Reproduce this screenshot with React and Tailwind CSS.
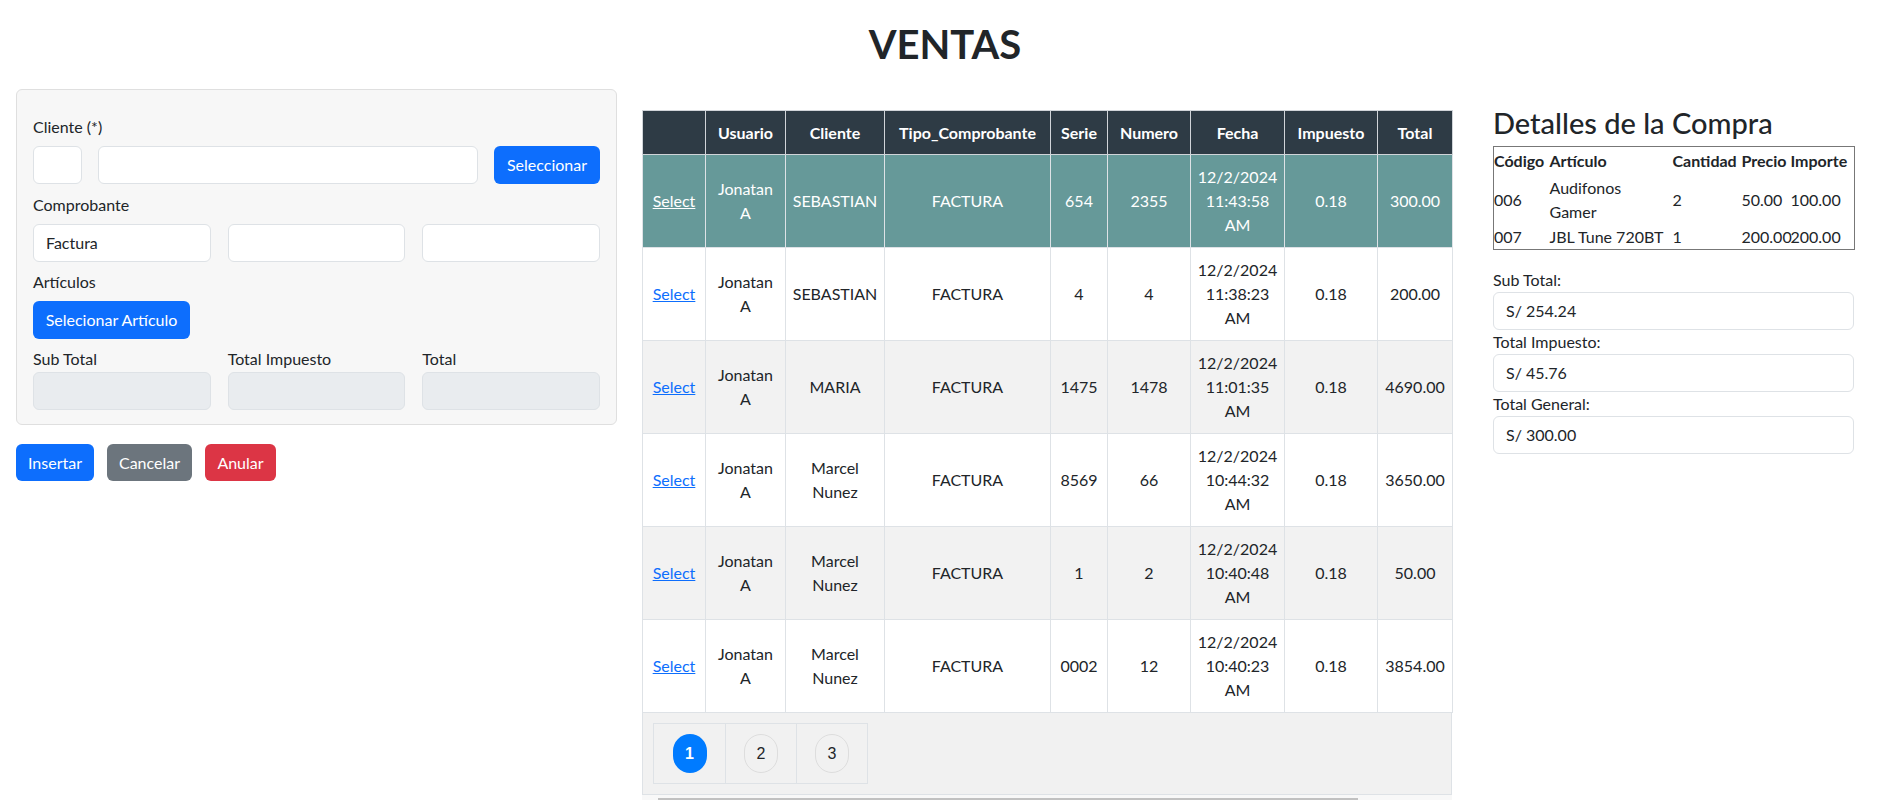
import React from "react";

const rows = [
  { cliente: ["SEBASTIAN"], serie: "654", numero: "2355", hora: "11:43:58", total: "300.00", selected: true },
  { cliente: ["SEBASTIAN"], serie: "4", numero: "4", hora: "11:38:23", total: "200.00" },
  { cliente: ["MARIA"], serie: "1475", numero: "1478", hora: "11:01:35", total: "4690.00" },
  { cliente: ["Marcel", "Nunez"], serie: "8569", numero: "66", hora: "10:44:32", total: "3650.00" },
  { cliente: ["Marcel", "Nunez"], serie: "1", numero: "2", hora: "10:40:48", total: "50.00" },
  { cliente: ["Marcel", "Nunez"], serie: "0002", numero: "12", hora: "10:40:23", total: "3854.00" },
];

const headers = ["", "Usuario", "Cliente", "Tipo_Comprobante", "Serie", "Numero", "Fecha", "Impuesto", "Total"];

function Lines({ items }) {
  return (
    <div className="flex flex-col items-center leading-6">
      {items.map((t, i) => (
        <span key={i}>{t}</span>
      ))}
    </div>
  );
}

function Input({ value = "", disabled = false, className = "" }) {
  return (
    <div
      className={
        "h-[38px] rounded-md border border-[#dee2e6] px-3 flex items-center text-base " +
        (disabled ? "bg-[#e9ecef] " : "bg-white ") +
        className
      }
    >
      {value}
    </div>
  );
}

function App() {
  return (
    <div className="min-h-screen bg-white font-['Lato',sans-serif] text-[#212529] text-base">
      <h1 className="pt-5 text-center text-[40px] font-bold leading-[48px]">VENTAS</h1>

      <div className="mt-[21px] flex items-start pl-4">
        {/* formulario */}
        <div className="w-[601px] shrink-0">
          <div className="rounded-md border border-[#dfdfdf] bg-[#f7f7f7] px-4 pt-[25px] pb-[14px]">
            <div className="leading-6">Cliente (*)</div>
            <div className="mt-[7px] flex gap-4">
              <Input className="w-[49px]" />
              <Input className="flex-1" />
              <button className="h-[38px] w-[106px] rounded-md bg-[#0d6efd] text-white">Seleccionar</button>
            </div>

            <div className="mt-[9px] leading-6">Comprobante</div>
            <div className="mt-[7px] grid grid-cols-3 gap-x-[17px]">
              <Input value="Factura" />
              <Input />
              <Input />
            </div>

            <div className="mt-2 leading-6">Artículos</div>
            <button className="mt-[7px] h-[38px] w-[157px] rounded-md bg-[#0d6efd] text-white">
              Selecionar Artículo
            </button>

            <div className="mt-2 grid grid-cols-3 gap-x-[17px]">
              <div className="leading-6">Sub Total</div>
              <div className="leading-6">Total Impuesto</div>
              <div className="leading-6">Total</div>
              <Input disabled className="mt-px" />
              <Input disabled className="mt-px" />
              <Input disabled className="mt-px" />
            </div>
          </div>

          <div className="mt-[19px] flex gap-[13px]">
            <button className="h-[37px] w-[78px] rounded-md bg-[#0d6efd] text-white">Insertar</button>
            <button className="h-[37px] w-[85px] rounded-md bg-[#6c757d] text-white">Cancelar</button>
            <button className="h-[37px] w-[71px] rounded-md bg-[#dc3545] text-white">Anular</button>
          </div>
        </div>

        {/* tabla de ventas */}
        <div className="ml-[25px] mt-[21px] w-[810px] shrink-0">
          <table className="w-[810px] table-fixed border-collapse border border-[#dee2e6] text-center">
            <colgroup>
              <col className="w-[63px]" />
              <col className="w-[80px]" />
              <col className="w-[99px]" />
              <col className="w-[166px]" />
              <col className="w-[57px]" />
              <col className="w-[83px]" />
              <col className="w-[94px]" />
              <col className="w-[93px]" />
              <col className="w-[75px]" />
            </colgroup>
            <thead>
              <tr className="h-[44px] bg-[#2e3b45] text-white">
                {headers.map((h, i) => (
                  <th key={i} className="border border-[#d0d4d8] px-1 font-bold">
                    {h}
                  </th>
                ))}
              </tr>
            </thead>
            <tbody>
              {rows.map((r, i) => {
                const bg = r.selected ? "bg-[#669999] text-white" : i % 2 === 0 ? "bg-[#f2f2f2]" : "bg-white";
                return (
                  <tr key={i} className={"h-[93px] " + bg}>
                    <td className="border border-[#dee2e6] px-1">
                      <span className={"underline " + (r.selected ? "text-white" : "text-[#0d6efd]")}>Select</span>
                    </td>
                    <td className="border border-[#dee2e6] px-1">
                      <Lines items={["Jonatan", "A"]} />
                    </td>
                    <td className="border border-[#dee2e6] px-1">
                      <Lines items={r.cliente} />
                    </td>
                    <td className="border border-[#dee2e6] px-1">FACTURA</td>
                    <td className="border border-[#dee2e6] px-1">{r.serie}</td>
                    <td className="border border-[#dee2e6] px-1">{r.numero}</td>
                    <td className="border border-[#dee2e6] px-1">
                      <Lines items={["12/2/2024", r.hora, "AM"]} />
                    </td>
                    <td className="border border-[#dee2e6] px-1">0.18</td>
                    <td className="border border-[#dee2e6] px-1">{r.total}</td>
                  </tr>
                );
              })}
            </tbody>
          </table>

          <div className="h-[82px] border-x border-b border-[#dee2e6] bg-[#f1f1f1] pl-[10px] pt-[10px]">
            <div className="flex w-fit border border-[#dee2e6] font-['Liberation_Sans',sans-serif]">
              {["1", "2", "3"].map((n, i) => (
                <div
                  key={n}
                  className={"flex h-[59px] w-[71px] items-center justify-center " + (i > 0 ? "border-l border-[#dee2e6]" : "")}
                >
                  <span
                    className={
                      "flex h-[39px] w-[34px] items-center justify-center rounded-full text-base " +
                      (i === 0 ? "bg-[#007bff] font-bold text-white" : "border border-[#dddddd] text-[#212529]")
                    }
                  >
                    {n}
                  </span>
                </div>
              ))}
            </div>
          </div>
          <div className="h-[10px] bg-[#f8f8f8] pt-[3px]">
            <div className="ml-4 h-[7px] w-[700px] bg-[#c1c1c1]" />
          </div>
        </div>

        {/* detalles */}
        <div className="ml-[41px] mt-[15px] w-[361px] shrink-0">
          <h2 className="text-[29px] font-medium leading-[38px]">Detalles de la Compra</h2>
          <table className="mt-1 w-[361px] table-fixed border-collapse border border-[#777777] text-left">
            <colgroup>
              <col className="w-[56px]" />
              <col className="w-[123px]" />
              <col className="w-[69px]" />
              <col className="w-[49px]" />
              <col className="w-[64px]" />
            </colgroup>
            <thead>
              <tr className="h-[28px] leading-6">
                <th className="font-bold">Código</th>
                <th className="font-bold">Artículo</th>
                <th className="font-bold">Cantidad</th>
                <th className="font-bold">Precio</th>
                <th className="font-bold">Importe</th>
              </tr>
            </thead>
            <tbody className="leading-6">
              <tr className="h-[50px]">
                <td>006</td>
                <td>
                  Audifonos
                  <br />
                  Gamer
                </td>
                <td>2</td>
                <td>50.00</td>
                <td>100.00</td>
              </tr>
              <tr className="h-[25px]">
                <td>007</td>
                <td className="whitespace-nowrap">JBL Tune 720BT</td>
                <td>1</td>
                <td>200.00</td>
                <td>200.00</td>
              </tr>
            </tbody>
          </table>

          <div className="mt-[18px] leading-6">Sub Total:</div>
          <Input value="S/ 254.24" className="h-[37px]" />
          <div className="leading-6">Total Impuesto:</div>
          <Input value="S/ 45.76" className="h-[37px]" />
          <div className="leading-6">Total General:</div>
          <Input value="S/ 300.00" className="h-[37px]" />
        </div>
      </div>
    </div>
  );
}

export default App;
